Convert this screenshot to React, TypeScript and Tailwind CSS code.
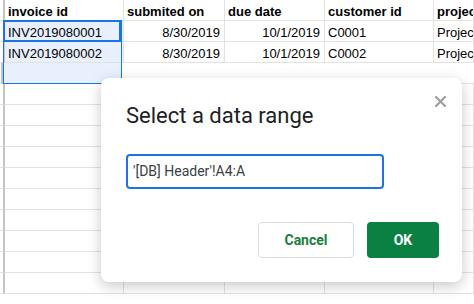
import React from 'react';

const cols = [
  { w: 'w-[3px]', stub: true },
  { w: 'w-[119px]' },
  { w: 'w-[101px]' },
  { w: 'w-[100px]' },
  { w: 'w-[109px]' },
  { w: 'flex-1' },
];

const header = ['', 'invoice id', 'submited on', 'due date', 'customer id', 'project'];
const rows: string[][] = [
  ['', 'INV2019080001', '8/30/2019', '10/1/2019', 'C0001', 'Project'],
  ['', 'INV2019080002', '8/30/2019', '10/1/2019', 'C0002', 'Project'],
];
const rightAligned = [2, 3];

function Row({ cells, bold }: { cells: string[]; bold?: boolean }) {
  return (
    <div className="flex h-[21px]">
      {cols.map((c, i) => (
        <div
          key={i}
          className={`${c.w} shrink-0 overflow-hidden whitespace-nowrap border-b border-[#e2e2e2] flex items-end pb-[1px] leading-[15px] ${
            c.stub ? 'border-r-2 border-r-[#c4c4c4]' : 'border-r border-r-[#e2e2e2]'
          } ${i === 1 && !bold ? 'bg-[#e8f0fe]' : ''} ${rightAligned.includes(i) && !bold ? 'justify-end pr-[4px]' : 'pl-[3px]'} ${
            bold ? 'font-bold' : ''
          }`}
        >
          {cells[i]}
        </div>
      ))}
    </div>
  );
}

export default function App() {
  const empty = ['', '', '', '', '', ''];
  return (
    <div className="relative w-[474px] h-[304px] overflow-hidden bg-white text-[13px] text-black font-['Liberation_Sans',Arial,sans-serif]">
      <Row cells={header} bold />
      {rows.map((r, i) => (
        <Row key={i} cells={r} />
      ))}
      <div className="flex h-[21px]">
        <div className="w-[3px] shrink-0 border-r-2 border-r-[#c4c4c4] border-b border-[#e2e2e2]" />
        <div className="w-[119px] shrink-0 bg-[#e8f0fe] border-b border-r border-[#e2e2e2]" />
        <div className="flex-1 border-b border-[#e2e2e2]" />
      </div>
      {Array.from({ length: 10 }).map((_, i) => (
        <Row key={'e' + i} cells={empty} bold />
      ))}

      {/* selection range + active cell */}
      <div className="absolute left-[3px] top-[20px] w-[119px] h-[64px] border border-[#1a73e8] pointer-events-none" />
      <div className="absolute left-[3px] top-[20px] w-[118px] h-[22px] border-2 border-[#1a73e8] pointer-events-none" />

      {/* dialog */}
      <div className="absolute left-[101px] top-[78px] w-[361px] h-[204px] rounded-lg bg-white shadow-[0_4px_14px_rgba(0,0,0,0.22)] font-['Roboto',sans-serif] flex flex-col px-[25px]">
        <svg
          className="absolute right-[16px] top-[18px]"
          width="11"
          height="11"
          viewBox="0 0 11 11"
        >
          <path d="M1 1L10 10M10 1L1 10" stroke="#9e9e9e" strokeWidth="2.2" strokeLinecap="square" />
        </svg>
        <div className="mt-[24px] text-[22px] leading-[28px] text-[#202124]">Select a data range</div>
        <div className="mt-[24px] w-[258px] h-[35px] border-2 border-[#1a73e8] rounded-[4px] flex items-center pl-[5px] text-[14px] text-[#3c4043]">
          '[DB] Header'!A4:A
        </div>
        <div className="mt-[33px] flex justify-end gap-[13px] -mr-[2px]">
          <button className="w-[96px] h-[36px] rounded-[4px] border border-[#dadce0] bg-white text-[14px] font-bold text-[#188038]">
            Cancel
          </button>
          <button className="w-[72px] h-[36px] rounded-[4px] bg-[#0b8043] text-[14px] font-bold text-white">
            OK
          </button>
        </div>
      </div>
    </div>
  );
}
